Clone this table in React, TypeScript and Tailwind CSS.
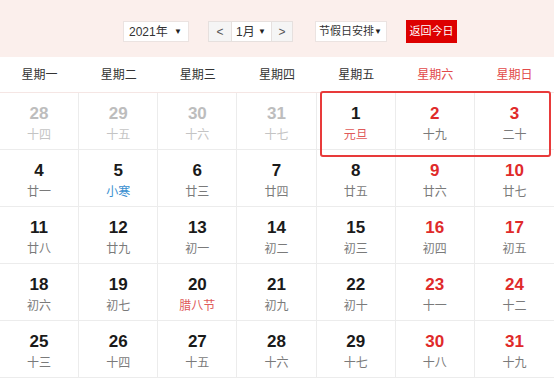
type Day = { d: number; l: string; kind?: 'muted' | 'red' | 'fest' | 'term' }

const weekdays = ['星期一', '星期二', '星期三', '星期四', '星期五', '星期六', '星期日']

const rows: Day[][] = [
  [
    { d: 28, l: '十四', kind: 'muted' },
    { d: 29, l: '十五', kind: 'muted' },
    { d: 30, l: '十六', kind: 'muted' },
    { d: 31, l: '十七', kind: 'muted' },
    { d: 1, l: '元旦', kind: 'fest' },
    { d: 2, l: '十九', kind: 'red' },
    { d: 3, l: '二十', kind: 'red' },
  ],
  [
    { d: 4, l: '廿一' },
    { d: 5, l: '小寒', kind: 'term' },
    { d: 6, l: '廿三' },
    { d: 7, l: '廿四' },
    { d: 8, l: '廿五' },
    { d: 9, l: '廿六', kind: 'red' },
    { d: 10, l: '廿七', kind: 'red' },
  ],
  [
    { d: 11, l: '廿八' },
    { d: 12, l: '廿九' },
    { d: 13, l: '初一' },
    { d: 14, l: '初二' },
    { d: 15, l: '初三' },
    { d: 16, l: '初四', kind: 'red' },
    { d: 17, l: '初五', kind: 'red' },
  ],
  [
    { d: 18, l: '初六' },
    { d: 19, l: '初七' },
    { d: 20, l: '腊八节', kind: 'fest' },
    { d: 21, l: '初九' },
    { d: 22, l: '初十' },
    { d: 23, l: '十一', kind: 'red' },
    { d: 24, l: '十二', kind: 'red' },
  ],
  [
    { d: 25, l: '十三' },
    { d: 26, l: '十四' },
    { d: 27, l: '十五' },
    { d: 28, l: '十六' },
    { d: 29, l: '十七' },
    { d: 30, l: '十八', kind: 'red' },
    { d: 31, l: '十九', kind: 'red' },
  ],
]

function numColor(kind?: Day['kind']) {
  if (kind === 'muted') return 'text-[#bdbdbd]'
  if (kind === 'red') return 'text-[#e02a2a]'
  return 'text-[#1a1a1a]'
}

function lunarColor(kind?: Day['kind']) {
  if (kind === 'muted') return 'text-[#c4c4c4]'
  if (kind === 'fest') return 'text-[#e05a5a]'
  if (kind === 'term') return 'text-[#3a8fd0]'
  return 'text-[#7a7a7a]'
}

function Arrow() {
  return <span className="text-[8px] leading-none text-[#222]">▼</span>
}

export default function App() {
  return (
    <div
      className="relative w-[554px] h-[379px] overflow-hidden bg-white"
      style={{ fontFamily: '"Liberation Sans", "Noto Sans CJK SC", sans-serif' }}
    >
      {/* toolbar */}
      <div className="h-[57px] bg-[#fbefec] flex items-center pl-[123px] pt-[6px] text-[12px] text-[#333] whitespace-nowrap">
        <div className="w-[66px] h-[21px] bg-white border border-[#ebe3e1] flex items-center justify-between pl-[5px] pr-[6px]">
          <span>2021年</span>
          <Arrow />
        </div>

        <div className="ml-[19px] flex h-[21px] border border-[#e6e0de]">
          <div className="w-[22px] bg-[#f5f5f5] flex items-center justify-center text-[#555]">&lt;</div>
          <div className="w-[41px] bg-white border-x border-[#e6e0de] flex items-center justify-between pl-[4px] pr-[5px]">
            <span>1月</span>
            <Arrow />
          </div>
          <div className="w-[20px] bg-[#f5f5f5] flex items-center justify-center text-[#555]">&gt;</div>
        </div>

        <div className="ml-[22px] w-[72px] h-[21px] bg-white border border-[#ebe3e1] flex items-center justify-between pl-[3px] pr-[4px]">
          <span className="text-[11px]">节假日安排</span>
          <Arrow />
        </div>

        <button className="ml-[19px] w-[51px] h-[23px] bg-[#dd0000] text-white text-[11px] flex items-center justify-center">
          返回今日
        </button>
      </div>

      {/* weekdays */}
      <div className="grid grid-cols-7 h-[36px] border-b border-[#f5e6e4] text-[12px]">
        {weekdays.map((w, i) => (
          <div
            key={w}
            className={`flex items-center justify-center ${i >= 5 ? 'text-[#e24a4a]' : 'text-[#333]'}`}
          >
            {w}
          </div>
        ))}
      </div>

      {/* days */}
      {rows.map((row, ri) => (
        <div key={ri} className="grid grid-cols-7 h-[57px] border-b border-[#ececec]">
          {row.map((day, ci) => (
            <div
              key={ci}
              className={`flex flex-col items-center pt-[11px] ${ci < 6 ? 'border-r border-[#ececec]' : ''}`}
            >
              <span className={`text-[17px] font-bold leading-[20px] ${numColor(day.kind)}`}>{day.d}</span>
              <span className={`text-[12px] leading-[16px] mt-[3px] ${lunarColor(day.kind)}`}>{day.l}</span>
            </div>
          ))}
        </div>
      ))}

      {/* holiday range marker */}
      <div className="absolute left-[320px] top-[91px] w-[231px] h-[66px] border-2 border-[#e83a3a] rounded-[3px] pointer-events-none" />
    </div>
  )
}
